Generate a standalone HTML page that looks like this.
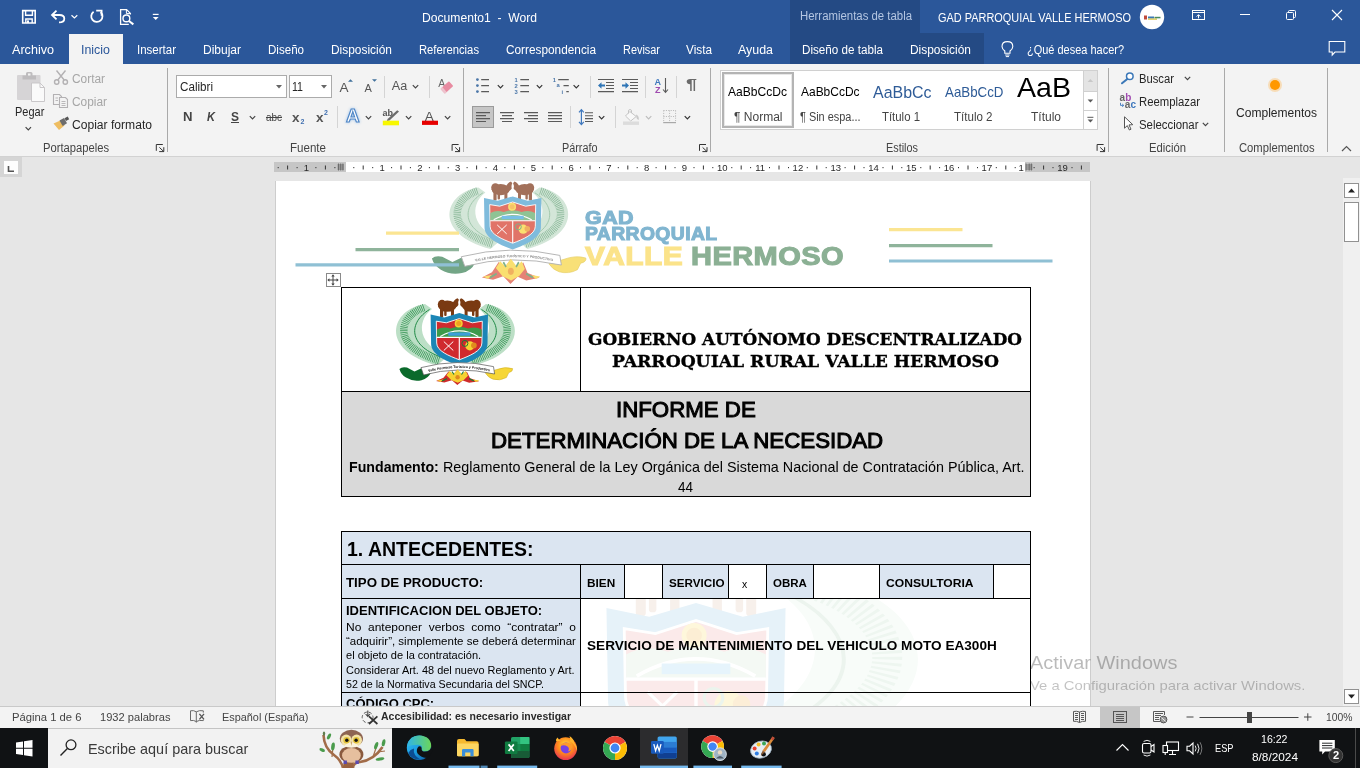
<!DOCTYPE html>
<html lang="es"><head><meta charset="utf-8"><title>Documento1 - Word</title>
<style>
html,body{margin:0;padding:0;}
body{width:1360px;height:768px;overflow:hidden;position:relative;background:#e6e6e6;font-family:"Liberation Sans",sans-serif;}
.a{position:absolute;}
.t{position:absolute;white-space:nowrap;transform-origin:0 50%;display:block;}
svg{position:absolute;overflow:visible;will-change:transform;}
#texts{position:absolute;left:0;top:0;width:1360px;height:768px;will-change:transform;}
#titlebar{left:0;top:0;width:1360px;height:64px;background:#2b579a;}
#ctx{left:790px;top:0;width:130px;height:33px;background:#244a84;}
#ctx2{left:790px;top:33px;width:194px;height:31px;background:#244a84;}
#tabsel{left:69px;top:34px;width:54px;height:30px;background:#f3f3f3;}
#ribbon{left:0;top:64px;width:1360px;height:92px;background:#f3f3f3;border-bottom:1px solid #d2d2d2;}
.vsep{width:1px;background:#a9a9a9;}
.vs2{width:1px;background:#d4d4d4;}
#docarea{left:0;top:156px;width:1360px;height:550px;background:#e6e6e6;}
#pagebox{left:275px;top:181px;width:816px;height:525px;background:#fff;border-left:1px solid #cdcdcd;border-right:1px solid #cdcdcd;box-sizing:border-box;overflow:hidden;}
#status{left:0;top:706px;width:1360px;height:22px;background:#f3f3f3;}
#taskbar{left:0;top:728px;width:1360px;height:40px;background:#101214;}
#search{left:48px;top:728px;width:344px;height:40px;background:#f2f2f2;}
.cell{position:absolute;box-sizing:border-box;border:1px solid #000;}
.blue{background:#dce6f2;}

</style></head>
<body>
<div class="a" id="titlebar"></div>
<div class="a" id="ctx"></div>
<div class="a" id="ctx2"></div>
<div class="a" id="tabsel"></div>
<div class="a" id="ribbon"></div>
<div class="a" id="docarea"></div>
<div class="a" style="left:0;top:156px;width:1360px;height:1px;background:#d2d2d2"></div>
<div class="a" style="left:0;top:157px;width:22px;height:20px;background:#d5d5d5"></div>
<div class="a" style="left:4px;top:161px;width:14px;height:13px;background:#fdfdfd"></div>
<div class="a" style="left:274px;top:162px;width:72px;height:10px;background:#c6c6c6"></div>
<div class="a" style="left:346px;top:162px;width:679px;height:10px;background:#fff"></div>
<div class="a" style="left:1025px;top:162px;width:65px;height:10px;background:#c6c6c6"></div>
<svg width="1360" height="40" viewBox="0 156 1360 40" style="left:0;top:156px" font-family='"Liberation Sans", sans-serif' font-size="9.5" fill="#2a2a2a" text-anchor="middle">
<path d="M8.5 166 V171.3 H14" fill="none" stroke="#555" stroke-width="1.6"/>
<path d="M287.6 165.5 V169.5 M325.4 165.5 V169.5 M363.2 165.5 V169.5 M401.0 165.5 V169.5 M438.8 165.5 V169.5 M476.6 165.5 V169.5 M514.4 165.5 V169.5 M552.2 165.5 V169.5 M590.0 165.5 V169.5 M627.8 165.5 V169.5 M665.6 165.5 V169.5 M703.4 165.5 V169.5 M741.2 165.5 V169.5 M779.0 165.5 V169.5 M816.8 165.5 V169.5 M854.6 165.5 V169.5 M892.4 165.5 V169.5 M930.2 165.5 V169.5 M968.0 165.5 V169.5 M1005.8 165.5 V169.5 M1043.6 165.5 V169.5 M1081.4 165.5 V169.5" stroke="#333" stroke-width="1"/>
<path d="M278.2 167 V168.2 M297.1 167 V168.2 M315.9 167 V168.2 M334.9 167 V168.2 M353.8 167 V168.2 M372.7 167 V168.2 M391.6 167 V168.2 M410.4 167 V168.2 M429.4 167 V168.2 M448.2 167 V168.2 M467.1 167 V168.2 M486.1 167 V168.2 M504.9 167 V168.2 M523.9 167 V168.2 M542.8 167 V168.2 M561.6 167 V168.2 M580.5 167 V168.2 M599.5 167 V168.2 M618.3 167 V168.2 M637.2 167 V168.2 M656.1 167 V168.2 M675.0 167 V168.2 M694.0 167 V168.2 M712.8 167 V168.2 M731.8 167 V168.2 M750.6 167 V168.2 M769.5 167 V168.2 M788.5 167 V168.2 M807.3 167 V168.2 M826.2 167 V168.2 M845.1 167 V168.2 M864.0 167 V168.2 M883.0 167 V168.2 M901.8 167 V168.2 M920.8 167 V168.2 M939.6 167 V168.2 M958.5 167 V168.2 M977.5 167 V168.2 M996.3 167 V168.2 M1015.2 167 V168.2 M1034.1 167 V168.2 M1053.0 167 V168.2 M1072.0 167 V168.2" stroke="#333" stroke-width="1"/>
<text x="382.1" y="170.6">1</text>
<text x="419.9" y="170.6">2</text>
<text x="457.7" y="170.6">3</text>
<text x="495.5" y="170.6">4</text>
<text x="533.3" y="170.6">5</text>
<text x="571.1" y="170.6">6</text>
<text x="608.9" y="170.6">7</text>
<text x="646.7" y="170.6">8</text>
<text x="684.5" y="170.6">9</text>
<text x="722.3" y="170.6">10</text>
<text x="760.1" y="170.6">11</text>
<text x="797.9" y="170.6">12</text>
<text x="835.7" y="170.6">13</text>
<text x="873.5" y="170.6">14</text>
<text x="911.3" y="170.6">15</text>
<text x="949.1" y="170.6">16</text>
<text x="986.9" y="170.6">17</text>
<text x="1021.2" y="170.6">1</text>
<text x="1062.5" y="170.6">19</text>
<text x="306.5" y="170.6">1</text>
<path d="M338.5 163.5 V170.5 M340.7 163.5 V170.5 M342.9 163.5 V170.5 M337.5 165 H344.0 M337.5 167 H344.0 M337.5 169 H344.0" stroke="#666" stroke-width="0.9"/>
<path d="M1026.0 163.5 V170.5 M1029.2 163.5 V170.5 M1031.4 163.5 V170.5 M1026.0 165 H1032.5 M1026.0 167 H1032.5 M1026.0 169 H1032.5" stroke="#666" stroke-width="0.9"/>
</svg>
<div class="a" id="pagebox"></div>
<svg width="1360" height="768" viewBox="0 0 1360 768" style="left:0;top:0">
<defs><clipPath id="wmclip"><rect x="581" y="599" width="449" height="107"/></clipPath></defs>
<g transform="translate(53.4 -116.6)">
<g transform="translate(459.3 335) scale(1.0 1) translate(-459.3 -335)">
<g >
<path d="M425 304 C 391 309 378 350 437 365.5 L 448 356 C 419 346 415 322 432 309 Z" fill="#d3e6d8"/>
<path d="M424 307.5 C 399 316 390 346 440 361" fill="none" stroke="#8dba9b" stroke-width="7.5" stroke-dasharray="0.8 1.0"/>
<path d="M429.5 309.5 C 409 322 406 346 445 358.5" fill="none" stroke="#a3c9ae" stroke-width="1"/>
</g>
<g transform="translate(911.0 0) scale(-1 1)">
<path d="M425 304 C 391 309 378 350 437 365.5 L 448 356 C 419 346 415 322 432 309 Z" fill="#d3e6d8"/>
<path d="M424 307.5 C 399 316 390 346 440 361" fill="none" stroke="#8dba9b" stroke-width="7.5" stroke-dasharray="0.8 1.0"/>
<path d="M429.5 309.5 C 409 322 406 346 445 358.5" fill="none" stroke="#a3c9ae" stroke-width="1"/>
</g>
</g>
<g  fill="#a2705a">
<ellipse cx="447.3" cy="306.2" rx="9" ry="5.6"/>
<ellipse cx="442" cy="304.4" rx="4.2" ry="4.6"/>
<path d="M452.5 303.5 Q454 299.5 457.6 298.2 L458.9 299.8 Q457.6 302 458.4 305 Q456.6 308 453 308 Z"/>
<rect x="440" y="308" width="3.2" height="9.2" rx="1"/><rect x="451" y="308" width="3" height="8.6" rx="1"/><rect x="444.2" y="309" width="2.4" height="7" rx="1"/>
</g>
<g transform="translate(918.6 0) scale(-1 1)" fill="#a2705a">
<ellipse cx="447.3" cy="306.2" rx="9" ry="5.6"/>
<ellipse cx="442" cy="304.4" rx="4.2" ry="4.6"/>
<path d="M452.5 303.5 Q454 299.5 457.6 298.2 L458.9 299.8 Q457.6 302 458.4 305 Q456.6 308 453 308 Z"/>
<rect x="440" y="308" width="3.2" height="9.2" rx="1"/><rect x="451" y="308" width="3" height="8.6" rx="1"/><rect x="444.2" y="309" width="2.4" height="7" rx="1"/>
</g>
<g transform="translate(3.3000000000000114 0)">
<path d="M427.3 314.6 L441 317.4 L456 313 L471 317.4 L484.7 314.6 L484.2 344 C 484.2 354 470 361 456 366 C 442 361 427.8 354 427.8 344 Z" fill="#7fbbdc"/>
<path d="M433 321.2 L443 322.8 L456 318.6 L469 322.8 L479 321.2 L478.6 343 C 478.6 351 466 356 456 359.8 C 446 356 433.4 351 433.4 343 Z" fill="#e17468" stroke="#fff" stroke-width="0.9"/>
<path d="M433.6 329.5 Q440 326 447 328.6 Q456 325 465 328.6 Q472 326 478.4 329.5 V337 H433.6 Z" fill="#8fc394"/>
<path d="M437 336.4 Q456 325.4 475 336.4" fill="none" stroke="#fff" stroke-width="1.2"/>
<rect x="445" y="332.4" width="22" height="3.4" fill="#78bfe6"/>
<path d="M433.6 337.4 H478.4 M456 337.4 V359.5" stroke="#fff" stroke-width="1.1"/>
<circle cx="455.4" cy="323.4" r="4" fill="#fadf70"/><circle cx="455.4" cy="323.4" r="2.5" fill="#f8c268"/>
<path d="M440.5 341.5 L450 350.5 M450 341.5 L440.5 350.5" stroke="#fff" stroke-width="1"/>
<circle cx="466.5" cy="345.8" r="4.6" fill="#fadf70"/><circle cx="470.6" cy="345.4" r="2.8" fill="#f0b060"/><circle cx="461.6" cy="343.4" r="3" fill="none" stroke="#7fb08a" stroke-width="1"/>
</g>
<g transform="translate(457.5 371.5) scale(1.36 1.30) translate(-457.5 -366.2)">
<path d="M431 372.6 L421 368.4 L414.5 371.6 L407 367.6 Q402 366.4 399.4 369 Q401 374.5 406 377.6 Q413 382 421.5 380.2 Q428.5 378.4 431 372.6 Z" fill="#73a586"/>
<path d="M485.4 373 L496.5 369.6 Q505 366.2 512.6 368.6 Q513.2 371.6 508.8 372.6 L506.4 377.6 Q500 381.2 493 379.2 Q488 377.4 485.4 373 Z" fill="#f8e077" stroke="#e6cf6a" stroke-width="0.5"/>
<path d="M421 367.6 Q457 358 493.5 366.6 L494.6 374 Q457 365.6 423.6 375 Z" fill="#fff" stroke="#b0b0b0" stroke-width="0.7"/>
<path id="rph" d="M427.5 372.4 Q457 364 490 371.4" fill="none"/>
<text font-size="2.6" font-weight="700" fill="#8a8a8a" font-family='"Liberation Sans",sans-serif'><textPath href="#rph" startOffset="4">VALLE HERMOSO TURÍSTICO Y PRODUCTIVO</textPath></text>
</g>
<g transform="translate(458 387.3) scale(1.34 1.62) translate(-458 -376.8)">
<path d="M436 381 l7.5 -3.2 l5 -6.4 l4.2 4 l4.6 -5.6 l4.6 5.6 l5 -3.6 l3.2 6.4 l9 3 l-10 1.6 l-6.4 -2.2 l-5.4 4.4 l-5.4 -4.8 l-7.6 2.2 Z" fill="#e58276"/>
<path d="M446.4 375.2 l3.2 -4.2 l3.8 3 l4.2 -4.6 l4.2 4.6 l4 -3 l2.2 4.8 l-4.2 4.2 l-6 2.8 l-6.6 -2.8 Z" fill="#fadf70"/>
<path d="M437 380.4 l6.5 -1 l-3 2.6 Z M479.5 380.4 l-6.5 -1 l3 2.6 Z" fill="#fadf70"/>
<circle cx="457.6" cy="377.2" r="2.2" fill="#f0b060"/>
<path d="M442 381 l5 -2.4 M474 381 l-5 -2.4 M452 371.5 l2 3 M463.5 371.5 l-2 3" stroke="#7fb08a" stroke-width="1.2"/>
</g>
</g>
<g stroke-width="3.2">
<path d="M386 233.2 H459" stroke="#fbe592"/><path d="M355.5 249.6 H459" stroke="#8fb49b"/><path d="M295.5 264.8 H459" stroke="#8fc0d4"/>
<path d="M889 229.6 H962.5" stroke="#fbe592"/><path d="M889 245.6 H992.5" stroke="#8fb49b"/><path d="M889 261 H1052.5" stroke="#8fc0d4"/>
</g>
<g transform="">
<g transform="translate(459.3 335) scale(1.0 1) translate(-459.3 -335)">
<g >
<path d="M425 304 C 391 309 378 350 437 365.5 L 448 356 C 419 346 415 322 432 309 Z" fill="#bcdfc6"/>
<path d="M424 307.5 C 399 316 390 346 440 361" fill="none" stroke="#3f9a5c" stroke-width="7.5" stroke-dasharray="0.8 1.0"/>
<path d="M429.5 309.5 C 409 322 406 346 445 358.5" fill="none" stroke="#1f8a45" stroke-width="1"/>
</g>
<g transform="translate(911.0 0) scale(-1 1)">
<path d="M425 304 C 391 309 378 350 437 365.5 L 448 356 C 419 346 415 322 432 309 Z" fill="#bcdfc6"/>
<path d="M424 307.5 C 399 316 390 346 440 361" fill="none" stroke="#3f9a5c" stroke-width="7.5" stroke-dasharray="0.8 1.0"/>
<path d="M429.5 309.5 C 409 322 406 346 445 358.5" fill="none" stroke="#1f8a45" stroke-width="1"/>
</g>
</g>
<g  fill="#7a3a12">
<ellipse cx="447.3" cy="306.2" rx="9" ry="5.6"/>
<ellipse cx="442" cy="304.4" rx="4.2" ry="4.6"/>
<path d="M452.5 303.5 Q454 299.5 457.6 298.2 L458.9 299.8 Q457.6 302 458.4 305 Q456.6 308 453 308 Z"/>
<rect x="440" y="308" width="3.2" height="9.2" rx="1"/><rect x="451" y="308" width="3" height="8.6" rx="1"/><rect x="444.2" y="309" width="2.4" height="7" rx="1"/>
</g>
<g transform="translate(918.6 0) scale(-1 1)" fill="#7a3a12">
<ellipse cx="447.3" cy="306.2" rx="9" ry="5.6"/>
<ellipse cx="442" cy="304.4" rx="4.2" ry="4.6"/>
<path d="M452.5 303.5 Q454 299.5 457.6 298.2 L458.9 299.8 Q457.6 302 458.4 305 Q456.6 308 453 308 Z"/>
<rect x="440" y="308" width="3.2" height="9.2" rx="1"/><rect x="451" y="308" width="3" height="8.6" rx="1"/><rect x="444.2" y="309" width="2.4" height="7" rx="1"/>
</g>
<g transform="translate(3.3000000000000114 0)">
<path d="M427.3 314.6 L441 317.4 L456 313 L471 317.4 L484.7 314.6 L484.2 344 C 484.2 354 470 361 456 366 C 442 361 427.8 354 427.8 344 Z" fill="#1c86b6"/>
<path d="M433 321.2 L443 322.8 L456 318.6 L469 322.8 L479 321.2 L478.6 343 C 478.6 351 466 356 456 359.8 C 446 356 433.4 351 433.4 343 Z" fill="#d02a2e" stroke="#fff" stroke-width="0.9"/>
<path d="M433.6 329.5 Q440 326 447 328.6 Q456 325 465 328.6 Q472 326 478.4 329.5 V337 H433.6 Z" fill="#3d9a4a"/>
<path d="M437 336.4 Q456 325.4 475 336.4" fill="none" stroke="#fff" stroke-width="1.2"/>
<rect x="445" y="332.4" width="22" height="3.4" fill="#3d9fd8"/>
<path d="M433.6 337.4 H478.4 M456 337.4 V359.5" stroke="#fff" stroke-width="1.1"/>
<circle cx="455.4" cy="323.4" r="4" fill="#f6d232"/><circle cx="455.4" cy="323.4" r="2.5" fill="#f0a020"/>
<path d="M440.5 341.5 L450 350.5 M450 341.5 L440.5 350.5" stroke="#fff" stroke-width="1"/>
<circle cx="466.5" cy="345.8" r="4.6" fill="#f6d232"/><circle cx="470.6" cy="345.4" r="2.8" fill="#e08a1e"/><circle cx="461.6" cy="343.4" r="3" fill="none" stroke="#1f7a35" stroke-width="1"/>
</g>
<g>
<path d="M431 372.6 L421 368.4 L414.5 371.6 L407 367.6 Q402 366.4 399.4 369 Q401 374.5 406 377.6 Q413 382 421.5 380.2 Q428.5 378.4 431 372.6 Z" fill="#0b6a2b"/>
<path d="M485.4 373 L496.5 369.6 Q505 366.2 512.6 368.6 Q513.2 371.6 508.8 372.6 L506.4 377.6 Q500 381.2 493 379.2 Q488 377.4 485.4 373 Z" fill="#f6d636" stroke="#c9a820" stroke-width="0.5"/>
<path d="M421 367.6 Q457 358 493.5 366.6 L494.6 374 Q457 365.6 423.6 375 Z" fill="#fff" stroke="#555" stroke-width="0.7"/>
<path id="rpm" d="M427.5 372.4 Q457 364 490 371.4" fill="none"/>
<text font-size="3.5" font-weight="700" fill="#111" font-family='"Liberation Sans",sans-serif'><textPath href="#rpm" startOffset="1">Valle Hermoso Turístico y Productivo</textPath></text>
</g>
<g>
<path d="M436 381 l7.5 -3.2 l5 -6.4 l4.2 4 l4.6 -5.6 l4.6 5.6 l5 -3.6 l3.2 6.4 l9 3 l-10 1.6 l-6.4 -2.2 l-5.4 4.4 l-5.4 -4.8 l-7.6 2.2 Z" fill="#cf2b2b"/>
<path d="M446.4 375.2 l3.2 -4.2 l3.8 3 l4.2 -4.6 l4.2 4.6 l4 -3 l2.2 4.8 l-4.2 4.2 l-6 2.8 l-6.6 -2.8 Z" fill="#f6d232"/>
<path d="M437 380.4 l6.5 -1 l-3 2.6 Z M479.5 380.4 l-6.5 -1 l3 2.6 Z" fill="#f6d232"/>
<circle cx="457.6" cy="377.2" r="2.2" fill="#e08a1e"/>
<path d="M442 381 l5 -2.4 M474 381 l-5 -2.4 M452 371.5 l2 3 M463.5 371.5 l-2 3" stroke="#1f7a35" stroke-width="1.2"/>
</g>
</g>
</svg>
<svg width="1360" height="768" viewBox="0 0 1360 768" style="left:0;top:0"><g clip-path="url(#wmclip)">
<g transform="translate(696 603) scale(3.12 3.12) translate(-459.3 -313)">
<g transform="translate(459.3 335) scale(1.28 1) translate(-459.3 -335)">
<g >
<path d="M425 304 C 391 309 378 350 437 365.5 L 448 356 C 419 346 415 322 432 309 Z" fill="#f8fcf9"/>
<path d="M424 307.5 C 399 316 390 346 440 361" fill="none" stroke="#eef6f0" stroke-width="7.5" stroke-dasharray="0.8 1.0"/>
<path d="M429.5 309.5 C 409 322 406 346 445 358.5" fill="none" stroke="#ecf4ee" stroke-width="1"/>
</g>
<g transform="translate(911.0 0) scale(-1 1)">
<path d="M425 304 C 391 309 378 350 437 365.5 L 448 356 C 419 346 415 322 432 309 Z" fill="#f8fcf9"/>
<path d="M424 307.5 C 399 316 390 346 440 361" fill="none" stroke="#eef6f0" stroke-width="7.5" stroke-dasharray="0.8 1.0"/>
<path d="M429.5 309.5 C 409 322 406 346 445 358.5" fill="none" stroke="#ecf4ee" stroke-width="1"/>
</g>
</g>
<g  fill="#f7f0eb">
<ellipse cx="447.3" cy="306.2" rx="9" ry="5.6"/>
<ellipse cx="442" cy="304.4" rx="4.2" ry="4.6"/>
<path d="M452.5 303.5 Q454 299.5 457.6 298.2 L458.9 299.8 Q457.6 302 458.4 305 Q456.6 308 453 308 Z"/>
<rect x="440" y="308" width="3.2" height="9.2" rx="1"/><rect x="451" y="308" width="3" height="8.6" rx="1"/><rect x="444.2" y="309" width="2.4" height="7" rx="1"/>
</g>
<g transform="translate(918.6 0) scale(-1 1)" fill="#f7f0eb">
<ellipse cx="447.3" cy="306.2" rx="9" ry="5.6"/>
<ellipse cx="442" cy="304.4" rx="4.2" ry="4.6"/>
<path d="M452.5 303.5 Q454 299.5 457.6 298.2 L458.9 299.8 Q457.6 302 458.4 305 Q456.6 308 453 308 Z"/>
<rect x="440" y="308" width="3.2" height="9.2" rx="1"/><rect x="451" y="308" width="3" height="8.6" rx="1"/><rect x="444.2" y="309" width="2.4" height="7" rx="1"/>
</g>
<g transform="translate(3.3000000000000114 0)">
<path d="M427.3 314.6 L441 317.4 L456 313 L471 317.4 L484.7 314.6 L484.2 344 C 484.2 354 470 361 456 366 C 442 361 427.8 354 427.8 344 Z" fill="#e6f2f9"/>
<path d="M433 321.2 L443 322.8 L456 318.6 L469 322.8 L479 321.2 L478.6 343 C 478.6 351 466 356 456 359.8 C 446 356 433.4 351 433.4 343 Z" fill="#fbeaea" stroke="#fff" stroke-width="0.9"/>
<path d="M433.6 329.5 Q440 326 447 328.6 Q456 325 465 328.6 Q472 326 478.4 329.5 V337 H433.6 Z" fill="#f4f9f4"/>
<path d="M437 336.4 Q456 325.4 475 336.4" fill="none" stroke="#fff" stroke-width="1.2"/>
<rect x="445" y="332.4" width="22" height="3.4" fill="#e6f4fc"/>
<path d="M433.6 337.4 H478.4 M456 337.4 V359.5" stroke="#fff" stroke-width="1.1"/>
<circle cx="455.4" cy="323.4" r="4" fill="#fef7db"/><circle cx="455.4" cy="323.4" r="2.5" fill="#fceed4"/>
<path d="M440.5 341.5 L450 350.5 M450 341.5 L440.5 350.5" stroke="#fff" stroke-width="1"/>
<circle cx="466.5" cy="345.8" r="4.6" fill="#fef7db"/><circle cx="470.6" cy="345.4" r="2.8" fill="#fceed7"/><circle cx="461.6" cy="343.4" r="3" fill="none" stroke="#ebf4ed" stroke-width="1"/>
</g>
<g>
<path d="M431 372.6 L421 368.4 L414.5 371.6 L407 367.6 Q402 366.4 399.4 369 Q401 374.5 406 377.6 Q413 382 421.5 380.2 Q428.5 378.4 431 372.6 Z" fill="#e9f2eb"/>
<path d="M485.4 373 L496.5 369.6 Q505 366.2 512.6 368.6 Q513.2 371.6 508.8 372.6 L506.4 377.6 Q500 381.2 493 379.2 Q488 377.4 485.4 373 Z" fill="#fef9e0" stroke="#f9f3d7" stroke-width="0.5"/>
<path d="M421 367.6 Q457 358 493.5 366.6 L494.6 374 Q457 365.6 423.6 375 Z" fill="#fff" stroke="#f2f2f2" stroke-width="0.7"/>
</g>
<g>
<path d="M436 381 l7.5 -3.2 l5 -6.4 l4.2 4 l4.6 -5.6 l4.6 5.6 l5 -3.6 l3.2 6.4 l9 3 l-10 1.6 l-6.4 -2.2 l-5.4 4.4 l-5.4 -4.8 l-7.6 2.2 Z" fill="#fae5e2"/>
<path d="M446.4 375.2 l3.2 -4.2 l3.8 3 l4.2 -4.6 l4.2 4.6 l4 -3 l2.2 4.8 l-4.2 4.2 l-6 2.8 l-6.6 -2.8 Z" fill="#fef7db"/>
<path d="M437 380.4 l6.5 -1 l-3 2.6 Z M479.5 380.4 l-6.5 -1 l3 2.6 Z" fill="#fef7db"/>
<circle cx="457.6" cy="377.2" r="2.2" fill="#fceed7"/>
<path d="M442 381 l5 -2.4 M474 381 l-5 -2.4 M452 371.5 l2 3 M463.5 371.5 l-2 3" stroke="#ebf4ed" stroke-width="1.2"/>
</g>
</g>
</g></svg>
<div class="cell" style="left:341px;top:287px;width:240px;height:105px;"></div>
<div class="cell" style="left:580px;top:287px;width:451px;height:105px;"></div>
<div class="cell" style="left:341px;top:391px;width:690px;height:106px;background:#d9d9d9;"></div>
<div class="cell" style="left:341px;top:531px;width:690px;height:34px;background:#dbe5f1;"></div>
<div class="cell" style="left:341px;top:564px;width:240px;height:35px;background:#dbe5f1;"></div>
<div class="cell" style="left:580px;top:564px;width:45px;height:35px;background:#dbe5f1;"></div>
<div class="cell" style="left:624px;top:564px;width:39px;height:35px;"></div>
<div class="cell" style="left:662px;top:564px;width:67px;height:35px;background:#dbe5f1;"></div>
<div class="cell" style="left:728px;top:564px;width:39px;height:35px;"></div>
<div class="cell" style="left:766px;top:564px;width:48px;height:35px;background:#dbe5f1;"></div>
<div class="cell" style="left:813px;top:564px;width:67px;height:35px;"></div>
<div class="cell" style="left:879px;top:564px;width:115px;height:35px;background:#dbe5f1;"></div>
<div class="cell" style="left:993px;top:564px;width:38px;height:35px;"></div>
<div class="cell" style="left:341px;top:598px;width:240px;height:95px;background:#dbe5f1;"></div>
<div class="cell" style="left:580px;top:598px;width:451px;height:95px;"></div>
<div class="cell" style="left:341px;top:692px;width:240px;height:29px;background:#dbe5f1;"></div>
<div class="cell" style="left:580px;top:692px;width:451px;height:29px;"></div>
<div class="a" style="left:326px;top:272.5px;width:14.5px;height:14px;background:#fff;border:1px solid #8a8a8a;box-sizing:border-box"></div>
<svg width="14" height="14" viewBox="0 0 14 14" style="left:326px;top:272.5px"><path d="M7 2.5 V11.5 M2.5 7 H11.5" stroke="#444" stroke-width="1"/><path d="M7 1.3 L5.3 3.4 H8.7 Z M7 12.7 L5.3 10.6 H8.7 Z M1.3 7 L3.4 5.3 V8.7 Z M12.7 7 L10.6 5.3 V8.7 Z" fill="#444"/></svg>
<div class="a" style="left:1343px;top:178px;width:17px;height:528px;background:#f0f0f0"></div>
<div class="a" style="left:1344px;top:183px;width:15px;height:15px;background:#fff;border:1px solid #919191;box-sizing:border-box"></div>
<div class="a" style="left:1344px;top:202px;width:15px;height:40px;background:#fff;border:1px solid #919191;box-sizing:border-box"></div>
<div class="a" style="left:1344px;top:689px;width:15px;height:15px;background:#fff;border:1px solid #919191;box-sizing:border-box"></div>
<svg width="17" height="530" viewBox="1343 178 17 530" style="left:1343px;top:178px"><path d="M1348 192.5 L1351.5 188.5 L1355 192.5 Z M1348 694.5 L1351.5 698.5 L1355 694.5 Z" fill="#222"/></svg>

<div class="a" id="status"></div>
<div class="a" id="taskbar"></div>
<div class="a" id="search"></div>
<!-- ribbon group separators -->
<div class="a vsep" style="left:167px;top:68px;height:84px"></div>
<div class="a vsep" style="left:463px;top:68px;height:84px"></div>
<div class="a vsep" style="left:710px;top:68px;height:84px"></div>
<div class="a vsep" style="left:1108px;top:68px;height:84px"></div>
<div class="a vsep" style="left:1224px;top:68px;height:84px"></div>
<div class="a vsep" style="left:1327px;top:68px;height:84px"></div>
<!-- small separators -->
<div class="a vs2" style="left:384px;top:76px;height:22px"></div>
<div class="a vs2" style="left:429px;top:76px;height:22px"></div>
<div class="a vs2" style="left:590px;top:76px;height:22px"></div>
<div class="a vs2" style="left:645px;top:76px;height:22px"></div>
<div class="a vs2" style="left:676px;top:76px;height:22px"></div>
<div class="a vs2" style="left:570px;top:106px;height:22px"></div>
<div class="a vs2" style="left:337px;top:106px;height:22px"></div>
<div class="a vs2" style="left:615px;top:106px;height:22px"></div>
<!-- font boxes -->
<div class="a" style="left:176px;top:75px;width:111px;height:23px;background:#fff;border:1px solid #ababab;box-sizing:border-box"></div>
<div class="a" style="left:289px;top:75px;width:43px;height:23px;background:#fff;border:1px solid #ababab;box-sizing:border-box"></div>
<!-- align-left selected -->
<div class="a" style="left:472px;top:106px;width:22px;height:22px;background:#c6c6c6;border:1px solid #9a9a9a;box-sizing:border-box"></div>
<!-- styles gallery -->
<div class="a" style="left:720px;top:70px;width:378px;height:60px;background:#fff;border:1px solid #d0d0d0;box-sizing:border-box"></div>
<div class="a" style="left:722px;top:72px;width:72px;height:56px;background:#fff;border:2px solid #b4b4b4;box-sizing:border-box;box-shadow:inset 0 0 0 1px #e8e8e8"></div>
<div class="a" style="left:1083px;top:71px;width:13px;height:58px;background:#fff;border-left:1px solid #d0d0d0"></div>
<div class="a" style="left:1084px;top:71px;width:13px;height:20px;background:#e4e4e4"></div>
<div class="a" style="left:1084px;top:91px;width:13px;height:1px;background:#d0d0d0"></div>
<div class="a" style="left:1084px;top:110px;width:13px;height:1px;background:#d0d0d0"></div>
<svg width="1360" height="160" viewBox="0 0 1360 160" style="left:0;top:0" font-family='"Liberation Sans", sans-serif'>
<defs>
<path id="chev" d="M-2.7 -1.4 L0 1.3 L2.7 -1.4" fill="none" stroke-width="1.2"/>
<path id="launch" d="M0.5 6.8 V0.5 H7 M3.6 3.4 L8 7.6 M8 3.2 V7.6 H3.4" fill="none" stroke="#333" stroke-width="1"/>
</defs>
<!-- paste icon -->
<rect x="17" y="75" width="23.5" height="25" rx="1" fill="#d6d4d6"/>
<path d="M22.5 79.5 V75.5 H26 V73.5 Q26 72 27.5 72 H31 Q32.5 72 32.5 73.5 V75.5 H36 V79.5 Z" fill="#bebcbe"/>
<rect x="28" y="73.5" width="2.5" height="2" fill="#f3f3f3"/>
<path d="M31.5 83 H40 L44.5 87.5 V101.5 H31.5 Z" fill="#fafafa" stroke="#c9c7c9" stroke-width="1"/>
<path d="M40 83 V87.5 H44.5" fill="none" stroke="#c9c7c9" stroke-width="1"/>
<use href="#chev" x="28.3" y="128.5" stroke="#444"/>
<!-- scissors -->
<g stroke="#b3b1b3" fill="none" stroke-width="1.4">
<circle cx="56.7" cy="82" r="2.2"/><circle cx="65.3" cy="82" r="2.2"/>
<path d="M57.8 80 L65.5 70.5 M64.2 80 L56.5 70.5"/>
</g>
<!-- copy icon -->
<g stroke="#b3b1b3" fill="#f3f3f3" stroke-width="1.1">
<path d="M53.5 94.5 H59.5 L61.5 96.5 V104.5 H53.5 Z"/>
<path d="M59.5 97.5 H65.5 L67.5 99.5 V107.5 H59.5 Z"/>
<path d="M55.5 98 H58 M55.5 100.5 H58 M61.5 101.5 H65.5 M61.5 103.5 H65.5 M61.5 105.5 H65.5" stroke-width="0.9"/>
</g>
<!-- format painter -->
<g>
<path d="M53.5 123.5 L61.5 120 L64.5 125.5 L59 130 Z" fill="#eebd61"/>
<path d="M59.5 120.5 L64 118 L67 123.2 L62.7 126 Z" fill="#6d6d6d"/>
<path d="M64.5 118.2 L67.7 116.5 L69.2 119.2 L66 121 Z" fill="#555"/>
</g>
<use href="#launch" x="155.8" y="144"/>
<use href="#launch" x="451.6" y="144"/>
<use href="#launch" x="699" y="144"/>
<use href="#launch" x="1096.6" y="144"/>
<!-- font dropdown arrows -->
<path d="M276 85 L282 85 L279 88.5 Z" fill="#666"/>
<path d="M321 85 L327 85 L324 88.5 Z" fill="#666"/>
<!-- dropdown chevron after S -->
<use href="#chev" x="252.5" y="117.5" stroke="#444"/>
<!-- x2 / x^2 -->
<g font-weight="700" fill="#555" font-size="13.5">
<text x="292" y="121.5">x</text><text x="316" y="121.5">x</text>
</g>
<g font-size="7" fill="#3f6fb0" font-weight="700"><text x="300.5" y="124">2</text><text x="324" y="114.5">2</text></g>
<!-- grow/shrink font -->
<g fill="#555"><text x="339.6" y="91.8" font-size="13.5">A</text><text x="364.4" y="91.8" font-size="11">A</text></g>
<path d="M348 81.8 L353 81.8 L350.5 79.2 Z M372 79.2 L377 79.2 L374.5 81.8 Z" fill="#41719c"/>
<text x="391.8" y="89.8" font-size="12.5" fill="#555" textLength="15.4" lengthAdjust="spacingAndGlyphs">Aa</text>
<use href="#chev" x="415.5" y="86.5" stroke="#444"/>
<!-- clear formatting -->
<text x="438.3" y="86.6" font-size="10.5" fill="#666">A</text>
<g transform="rotate(-42 447 88)"><rect x="441.5" y="84.2" width="11.5" height="6.6" rx="0.8" fill="#e88ba1"/><rect x="441.5" y="84.2" width="2.6" height="6.6" fill="#f3f3f3" opacity=".55"/></g>
<!-- text effects A -->
<text x="346" y="122.3" font-size="18" font-weight="700" fill="#fff" stroke="#4f86c6" stroke-width="1.1" style="filter:drop-shadow(0 0 1.5px #9cc2ea)" textLength="13.6" lengthAdjust="spacingAndGlyphs">A</text>
<use href="#chev" x="368.5" y="117.5" stroke="#444"/>
<!-- highlight -->
<text x="382.6" y="115.8" font-size="9" font-weight="700" fill="#555">ab</text>
<path d="M397.2 110.3 L399 111.6 L389.5 120.6 L386.8 120.9 L387.6 118.9 Z" fill="#6b6b6b"/>
<rect x="382.8" y="120.7" width="16.2" height="4.6" fill="#f7f700"/>
<use href="#chev" x="408.6" y="117.5" stroke="#444"/>
<!-- font color -->
<text x="424.8" y="121" font-size="13.5" fill="#555">A</text>
<rect x="422" y="120.7" width="16" height="4.2" fill="#e60000"/>
<use href="#chev" x="447.6" y="117.5" stroke="#444"/>
<!-- bullets -->
<g fill="#4a76a8"><circle cx="477.4" cy="79.6" r="1.4"/><circle cx="477.4" cy="85.6" r="1.4"/><circle cx="477.4" cy="91.6" r="1.4"/></g>
<path d="M481.2 79.6 H489 M481.2 85.6 H489 M481.2 91.6 H489" stroke="#5a5a5a" stroke-width="1.1"/>
<use href="#chev" x="500.5" y="86.5" stroke="#333"/>
<!-- numbering -->
<g font-size="5.8" font-weight="700" fill="#4a76a8"><text x="514.6" y="81.7">1</text><text x="514.6" y="87.7">2</text><text x="514.6" y="93.7">3</text></g>
<path d="M520.3 79.6 H529 M520.3 85.6 H529 M520.3 91.6 H529" stroke="#5a5a5a" stroke-width="1.1"/>
<use href="#chev" x="539.5" y="86.5" stroke="#333"/>
<!-- multilevel -->
<g font-size="5.8" font-weight="700" fill="#4a76a8"><text x="552.8" y="81.7">1</text><text x="556.6" y="87.2">a</text><text x="561.6" y="93.7">i</text></g>
<path d="M558.2 79.6 H568.8 M563.5 85.6 H568.8 M566.3 91.6 H568.8" stroke="#5a5a5a" stroke-width="1.1"/>
<use href="#chev" x="576.3" y="86.5" stroke="#333"/>
<!-- outdent / indent -->
<g stroke="#5a5a5a" stroke-width="1.1">
<path d="M598 79.5 H614 M606 82.5 H614 M606 85.5 H614 M606 88.5 H614 M598 91.6 H614"/>
<path d="M622 79.5 H638 M630 82.5 H638 M630 85.5 H638 M630 88.5 H638 M622 91.6 H638"/>
</g>
<path d="M598 85.5 L601.5 82.3 V84.6 H605 V86.4 H601.5 V88.7 Z" fill="#2e75b6"/>
<path d="M629 85.5 L625.5 82.3 V84.6 H622 V86.4 H625.5 V88.7 Z" fill="#2e75b6"/>
<!-- sort -->
<text x="654.6" y="84.6" font-size="9" font-weight="700" fill="#3f78bd">A</text>
<text x="654.9" y="92.8" font-size="9" font-weight="700" fill="#a04bb0">Z</text>
<path d="M665.5 78 V92 M663 89.5 L665.5 92.3 L668 89.5" fill="none" stroke="#5a5a5a" stroke-width="1.1"/>
<!-- pilcrow -->
<text x="686" y="89.4" font-size="15" font-weight="700" fill="#6a6a6a" textLength="11" lengthAdjust="spacingAndGlyphs">¶</text>
<!-- alignment -->
<g stroke="#5a5a5a" stroke-width="1.1">
<path d="M476 112.6 H490 M476 115.6 H486 M476 118.6 H490 M476 121.5 H486"/>
<path d="M500 112.6 H514 M502 115.6 H512 M500 118.6 H514 M502 121.5 H512"/>
<path d="M524 112.6 H538 M528 115.6 H538 M524 118.6 H538 M528 121.5 H538"/>
<path d="M548 112.6 H562 M548 115.6 H562 M548 118.6 H562 M548 121.5 H562"/>
<path d="M585 112.7 H593 M585 115.7 H593 M585 118.6 H593 M585 121.5 H593"/>
</g>
<path d="M581.4 110 V124.2 M579 112.3 L581.4 109.6 L583.8 112.3 M579 121.9 L581.4 124.6 L583.8 121.9" fill="none" stroke="#3f78bd" stroke-width="1.2"/>
<use href="#chev" x="601.6" y="117.5" stroke="#333"/>
<!-- shading (disabled) -->
<path d="M629.8 111.5 L636.2 116.5 L630.7 121 L625.5 116 Z" fill="#f8f8f8" stroke="#c4c4c4" stroke-width="1"/>
<path d="M628.5 113.5 V110.3 Q630 108.6 631.5 110.3 V113" fill="none" stroke="#c4c4c4" stroke-width="1"/>
<path d="M636 114.5 Q639.3 115.8 638.8 120 Q636.5 119.5 636.3 117 Z" fill="#c9c9c9"/>
<rect x="623" y="121.5" width="16" height="3.4" fill="#dcdcdc"/>
<use href="#chev" x="648.6" y="117.5" stroke="#bdbdbd"/>
<!-- borders -->
<g stroke="#b5b5b5" stroke-width="1" stroke-dasharray="1 1.4">
<path d="M663.5 110.5 H676 M663.5 116.5 H676 M663.7 110.5 V122 M669.6 110.5 V122 M675.6 110.5 V122"/>
</g>
<path d="M663.2 122.6 H676" stroke="#a8a8a8" stroke-width="1.2"/>
<use href="#chev" x="687.4" y="117.5" stroke="#333"/>
<!-- gallery arrows -->
<path d="M1087.6 82 L1090.4 79 L1093.2 82 Z" fill="#c8c8c8"/>
<path d="M1087.6 99.6 L1093.2 99.6 L1090.4 102.6 Z" fill="#5a5a5a"/>
<path d="M1087.4 117.3 H1093.4" stroke="#5a5a5a" stroke-width="1"/>
<path d="M1087.6 119.4 L1093.2 119.4 L1090.4 122.4 Z" fill="#5a5a5a"/>
<!-- find -->
<circle cx="1129.8" cy="76.3" r="3.3" fill="#fff" stroke="#3b78b8" stroke-width="1.5"/>
<path d="M1127.3 78.9 L1122 83.3" stroke="#3b78b8" stroke-width="2" stroke-linecap="round"/>
<use href="#chev" x="1187.5" y="78.3" stroke="#444"/>
<!-- replace -->
<g font-size="10" font-weight="700" font-family="Liberation Sans, sans-serif">
<text x="1119.6" y="100.6" fill="#666">a</text><text x="1125.2" y="100.6" fill="#a04bb0">b</text>
<text x="1124.8" y="107.8" fill="#666">a</text><text x="1130.4" y="107.8" fill="#3f78bd">c</text>
</g>
<path d="M1120.5 102.8 V105.4 H1123.5 M1122.2 104 L1123.8 105.4 L1122.2 106.8" fill="none" stroke="#3f78bd" stroke-width="0.9"/>
<!-- select cursor -->
<path d="M1124.5 116.8 V128.2 L1127.3 125.6 L1129.4 130 L1131 129.2 L1129 124.9 L1132.8 124.7 Z" fill="#fff" stroke="#555" stroke-width="1"/>
<use href="#chev" x="1205.5" y="124.3" stroke="#444"/>
<!-- complementos dot -->
<circle cx="1275" cy="85" r="7" fill="#ffb347" opacity=".35"/>
<circle cx="1275" cy="85" r="5" fill="#ff9800"/>
<!-- collapse -->
<path d="M1342 151 L1346.5 146.5 L1351 151" fill="none" stroke="#555" stroke-width="1.2"/>
</svg>

<svg width="1360" height="64" viewBox="0 0 1360 64" style="left:0;top:0" fill="none" stroke="#fff">
<!-- save -->
<path d="M22.7 10.6 H35.2 V23 H22.7 Z" stroke-width="1.6"/>
<path d="M25.6 10.6 V15.2 H32.4 V10.6" stroke-width="1.4"/>
<path d="M25.8 23 V19 H32.2 V23" stroke-width="1.4"/>
<rect x="27" y="20.4" width="2" height="2.6" fill="#fff" stroke="none"/>
<!-- undo -->
<path d="M56.5 10.6 L52 15 L56.5 19.4" stroke-width="1.8"/>
<path d="M52.6 15 H59.5 Q64.3 15 64.3 18.7 Q64.3 22.4 59 22.4" stroke-width="1.8"/>
<path d="M71.5 15.3 L74.4 18 L77.3 15.3" stroke-width="1.2"/>
<!-- redo -->
<path d="M100.6 12.2 A5.6 5.6 0 1 1 93.6 11.8" stroke-width="1.8"/>
<path d="M96.2 10.6 H101.6 V15.8" stroke-width="1.8"/>
<!-- print preview -->
<path d="M128.8 24.3 H120.6 V9.6 H126.6 L130.4 13.4 V14.5" stroke-width="1.3"/>
<path d="M126.4 9.8 V13.6 H130.2" stroke-width="1"/>
<circle cx="126.4" cy="18.4" r="3.4" stroke-width="1.4"/>
<path d="M129 21 L133.4 24.4" stroke-width="2"/>
<!-- customize -->
<path d="M152.8 14.4 H158.6" stroke-width="1.2"/>
<path d="M152.8 17 H158.6 L155.7 20 Z" fill="#fff" stroke="none"/>
<!-- avatar -->
<circle cx="1152" cy="17" r="12.2" fill="#fff" stroke="none"/>
<rect x="1144" y="15.5" width="3" height="4" fill="#c04a3a" stroke="none"/>
<rect x="1148" y="16.5" width="6" height="2" fill="#3a78b4" stroke="none"/>
<rect x="1148" y="18.5" width="9" height="1.2" fill="#d8c13a" stroke="none"/>
<rect x="1154.5" y="16.8" width="6" height="1.5" fill="#4d8a5c" stroke="none"/>
<!-- ribbon display -->
<rect x="1192.5" y="10.5" width="12" height="9" stroke-width="1"/>
<path d="M1192.5 12.5 H1204.5" stroke-width="1"/>
<path d="M1198.5 18.4 V14.8 M1196.6 16.6 L1198.5 14.7 L1200.4 16.6" stroke-width="1"/>
<!-- min / restore / close -->
<path d="M1240 14.5 H1250" stroke-width="1" shape-rendering="crispEdges"/>
<rect x="1286.5" y="12.5" width="7" height="7" rx="1" stroke-width="1"/>
<path d="M1288.5 12.5 V11.5 Q1288.5 10.5 1289.5 10.5 H1294.5 Q1295.5 10.5 1295.5 11.5 V16.5 Q1295.5 17.5 1294.5 17.5 H1293.5" stroke-width="1"/>
<path d="M1332 10 L1342 20 M1342 10 L1332 20" stroke-width="1.1"/>
<!-- lightbulb -->
<path d="M1004.8 51 Q1002 48.6 1002 46.4 Q1002 41.6 1007.4 41.6 Q1012.8 41.6 1012.8 46.4 Q1012.8 48.6 1010 51 V53.2 H1004.8 Z" stroke-width="1.1"/>
<path d="M1005.2 55 H1009.6 M1005.8 56.6 H1009" stroke-width="1"/>
<!-- comments -->
<path d="M1329.2 41.5 H1344.8 V52 H1335 L1332.2 55 V52 H1329.2 Z" stroke-width="1.1"/>
</svg>

<div class="a" style="left:0;top:706px;width:1360px;height:1px;background:#c9c9c9"></div>
<div class="a" style="left:1100px;top:707px;width:40px;height:21px;background:#c6c6c6"></div>
<svg width="1360" height="22" viewBox="0 706 1360 22" style="left:0;top:706px" fill="none" stroke="#5a5a5a" stroke-width="1">
<!-- proofing book icon -->
<path d="M196.3 711.8 V722.6 M196.3 711.8 Q193.5 710 190.5 710.8 V720.6 Q193.5 719.8 196.3 721.6 Q199 719.8 203.3 720.6 V719.6 M196.3 711.8 Q199.5 710 203.3 710.8 V712.6" stroke="#6a6a6a"/>
<path d="M199.4 713.8 L204 719.4 M204 713.8 L199.4 719.4" stroke-width="1.3" stroke="#555"/>
<!-- accessibility icon -->
<circle cx="367.6" cy="717.4" r="5.4" stroke-dasharray="3.2 2" stroke="#555"/>
<path d="M367.8 710.4 V716 M365.6 714 L367.8 716.4 L370 714" stroke-width="1.1" stroke="#444"/>
<path d="M369 716.4 L377.4 724 M377.4 716.4 L369 724" stroke-width="1.7" stroke="#333"/>
<!-- read mode -->
<path d="M1079.5 712 V722.5 M1079.5 712 Q1076.5 710.8 1073.5 711.5 V721.3 Q1076.5 720.8 1079.5 722.5 Q1082.5 720.8 1085.5 721.3 V711.5 Q1082.5 710.8 1079.5 712"/>
<path d="M1075 713.5 H1078 M1075 715.5 H1078 M1075 717.5 H1078 M1075 719.5 H1078 M1081 713.5 H1084 M1081 715.5 H1084 M1081 717.5 H1084 M1081 719.5 H1084" stroke-width="1" shape-rendering="crispEdges"/>
<!-- print layout -->
<rect x="1113.5" y="711.5" width="13" height="11" stroke="#555"/>
<path d="M1116 714.5 H1124 M1116 716.5 H1124 M1116 718.5 H1124 M1116 720.5 H1124" stroke="#555" stroke-width="1" shape-rendering="crispEdges"/>
<!-- web layout -->
<path d="M1160 721.5 H1153.5 V711.5 H1164.5 V715"/>
<path d="M1155 713.5 H1163 M1155 715.5 H1161 M1155 717.5 H1159 M1155 719.5 H1159" stroke-width="1" shape-rendering="crispEdges"/>
<circle cx="1163.5" cy="719.5" r="3.4" fill="#9a9a9a" stroke="#555"/><path d="M1161.4 717.6 L1165.6 721.4" stroke="#f3f3f3" stroke-width="0.9"/>
<!-- zoom slider -->
<path d="M1186.5 717 H1193.5 M1199.5 717.5 H1298.5 M1304 717 H1311.5 M1307.8 713.3 V720.8" stroke="#444"/>
<rect x="1247" y="712" width="5" height="11" fill="#444" stroke="none"/>
</svg>

<div class="a" style="left:48px;top:728px;width:344px;height:1px;background:#c4c4c4"></div>
<div class="a" style="left:640px;top:728px;width:48px;height:40px;background:#2c2c2e"></div>
<svg width="1360" height="40" viewBox="0 728 1360 40" style="left:0;top:728px">
<defs>
<linearGradient id="edg" x1="0" y1="0" x2="1" y2="1"><stop offset="0" stop-color="#35c1f1"/><stop offset=".5" stop-color="#1b9de2"/><stop offset="1" stop-color="#0c59a4"/></linearGradient>
<linearGradient id="edg2" x1="0" y1="0" x2="1" y2="0"><stop offset="0" stop-color="#2fb4e8"/><stop offset="1" stop-color="#6bd65a"/></linearGradient>
<radialGradient id="ffg" cx=".5" cy=".35" r=".7"><stop offset="0" stop-color="#ffdf3f"/><stop offset=".5" stop-color="#ff8a1c"/><stop offset="1" stop-color="#e3265c"/></radialGradient>
</defs>
<!-- windows logo -->
<path d="M16 742.5 L23 741.5 V747.8 H16 Z M24 741.3 L32.5 740 V747.8 H24 Z M16 748.8 H23 V755 L16 754 Z M24 748.8 H32.5 V756.5 L24 755.2 Z" fill="#fff"/>
<!-- search icon -->
<circle cx="71" cy="744.8" r="4.9" fill="none" stroke="#222" stroke-width="1.3"/><path d="M67.4 748.6 L60.5 755.4" stroke="#222" stroke-width="1.4"/>
<!-- owl on branch -->
<g>
<path d="M323.5 735 Q324 748 334 755 Q341 760 343 768 H353 Q353 763 360 762 Q374 760 382.5 747" fill="none" stroke="#a26c49" stroke-width="2.6"/>
<path d="M343 768 Q343 761 347 760 L354 762 L353 768 Z" fill="#9a6240"/>
<path d="M332 757 L333 747 M373 757 L376 748 M378 752 L385 751" stroke="#a26c49" stroke-width="1.2"/>
<g fill="#4a9b4c"><ellipse cx="324" cy="733.6" rx="1.2" ry="2.2" fill="#5f7e4d"/><ellipse cx="329" cy="736.4" rx="1.6" ry="3.2" transform="rotate(28 329 736.4)"/><ellipse cx="322.2" cy="750" rx="3" ry="1.6" transform="rotate(25 322.2 750)"/><ellipse cx="333" cy="746.4" rx="1.8" ry="4" transform="rotate(8 333 746.4)"/><ellipse cx="376.2" cy="745.6" rx="1.7" ry="3.8" transform="rotate(20 376.2 745.6)"/><ellipse cx="383.6" cy="742.8" rx="1.7" ry="3.6" transform="rotate(12 383.6 742.8)"/><ellipse cx="380" cy="759" rx="4.4" ry="1.6" transform="rotate(-10 380 759)"/></g>
<ellipse cx="351.4" cy="754.4" rx="12" ry="8.6" fill="#8a5a3e"/>
<ellipse cx="351.4" cy="755.4" rx="9.4" ry="7.4" fill="#e6bf9e"/>
<ellipse cx="351.4" cy="738.6" rx="11.6" ry="8.8" fill="#8d6452"/>
<ellipse cx="346.2" cy="740.2" rx="5.4" ry="5.6" fill="#f3e2a6"/><ellipse cx="356.6" cy="740.2" rx="5.4" ry="5.6" fill="#f3e2a6"/>
<path d="M343.5 746 Q351.4 749.5 359.3 746 L351.4 741 Z" fill="#fbf3dc"/>
<circle cx="346.6" cy="740.2" r="3.2" fill="#e3c23a"/><circle cx="356.3" cy="740.2" r="3.2" fill="#e3c23a"/>
<circle cx="346.8" cy="740.3" r="1.7" fill="#111"/><circle cx="356.1" cy="740.3" r="1.7" fill="#111"/>
<path d="M350.4 741.5 L352.4 741.5 L351.4 746 Z" fill="#c9a86a"/>
<path d="M343.5 760.5 h3.4 v3.4 h-3.4 Z M355.4 760.5 h3.4 v3.4 h-3.4 Z" fill="#5a4ab0"/>
</g>
<!-- edge -->
<circle cx="419" cy="747.8" r="12.2" fill="url(#edg)"/>
<path d="M407 746.4 Q408.6 735.6 419.5 735.6 Q431 736.2 431.2 746.2 Q430.6 751.4 424.8 751.4 Q421.4 751.2 421.8 748.4 Q422.6 745.2 418.6 744.8 Q412 744.6 407 746.4 Z" fill="url(#edg2)"/>
<path d="M421.6 748.2 Q421.2 751.6 425 751.6 Q430.4 751.4 431.2 746.8 L432.4 751 Q430.6 756 426.4 758 Q420.4 757.4 417.4 753.2 Q415.8 749.6 418.6 746.4 Q421.6 745.6 421.6 748.2 Z" fill="#101214"/>
<path d="M414 748.6 Q412.6 755.6 420.4 759.4 Q411.6 760 408.2 753 Q410.2 749.4 414 748.6 Z" fill="#0b4d93"/>
<!-- explorer -->
<path d="M457 741 Q457 739 459 739 H464.5 L466.5 741.2 H476.6 Q478.6 741.2 478.6 743 V754.4 Q478.6 756.3 476.6 756.3 H459 Q457 756.3 457 754.4 Z" fill="#f5b92f"/>
<rect x="457" y="743.4" width="21.6" height="12.9" rx="1.2" fill="#fcd662"/>
<path d="M462 756.3 V750.2 Q462 749 463.2 749 H472.4 Q473.6 749 473.6 750.2 V756.3 H470.4 V752.6 H465.2 V756.3 Z" fill="#3b8fd9"/>
<!-- excel -->
<rect x="511" y="737" width="18.4" height="21" rx="1.6" fill="#21a366"/>
<rect x="520.2" y="737" width="9.2" height="7" fill="#33c481"/><rect x="520.2" y="744" width="9.2" height="7" fill="#107c41"/><rect x="511" y="751" width="18.4" height="7" rx="1.2" fill="#185c37"/><rect x="511" y="744" width="9.2" height="7" fill="#107c41" opacity=".6"/>
<rect x="504.9" y="741.4" width="12.6" height="12.6" rx="1.2" fill="#107c41"/>
<path d="M508.6 744.4 L513.8 751 M513.8 744.4 L508.6 751" stroke="#fff" stroke-width="1.7"/>
<!-- firefox -->
<circle cx="565.6" cy="748.6" r="11.4" fill="url(#ffg)"/>
<path d="M569.5 736 Q574 739 574.4 743 Q577.6 746.5 577 751 Q574.5 743.5 570 741.5 Q570.5 738.5 569.5 736 Z M556 741.5 Q555.5 738.8 557.5 737.4 Q558.5 740 561.5 740.6 Z" fill="#ffb52e"/>
<circle cx="566" cy="748" r="5.4" fill="#7542e5"/><path d="M560.4 746 Q564 744.4 567.5 746.4 Q570 748.5 568 751.4 Q572.5 750.4 572 746 Q570 742.6 565 742.6 Q561.6 743.4 560.4 746 Z" fill="#ff9a2a"/>
<!-- chrome -->
<g transform="translate(615 748)">
<circle r="12" fill="#fff"/>
<path d="M0 0 L-10.39 -6 A12 12 0 0 1 10.39 -6 Z" fill="#ea4335"/>
<path d="M0 0 L10.39 -6 A12 12 0 0 1 0 12 Z" fill="#fbbc04"/>
<path d="M0 0 L0 12 A12 12 0 0 1 -10.39 -6 Z" fill="#34a853"/>
<circle r="5.6" fill="#fff"/><circle r="4.4" fill="#4285f4"/>
</g>
<!-- word -->
<rect x="657.6" y="736.4" width="19.2" height="22" rx="1.6" fill="#41a5ee"/>
<rect x="657.6" y="741.9" width="19.2" height="5.5" fill="#2b7cd3"/><rect x="657.6" y="747.4" width="19.2" height="5.5" fill="#185abd"/><path d="M657.6 752.9 H676.8 V756.8 Q676.8 758.4 675.2 758.4 H659.2 Q657.6 758.4 657.6 756.8 Z" fill="#103f91"/>
<rect x="651" y="741" width="12.8" height="12.8" rx="1.2" fill="#185abd"/>
<path d="M653.8 744.2 L655.6 750.8 L657.4 745.4 L659.2 750.8 L661 744.2" fill="none" stroke="#fff" stroke-width="1.3"/>
<!-- chrome 2 w/ profile -->
<g transform="translate(712.6 746.6)">
<circle r="11.4" fill="#fff"/>
<path d="M0 0 L-9.87 -5.7 A11.4 11.4 0 0 1 9.87 -5.7 Z" fill="#ea4335"/>
<path d="M0 0 L9.87 -5.7 A11.4 11.4 0 0 1 0 11.4 Z" fill="#fbbc04"/>
<path d="M0 0 L0 11.4 A11.4 11.4 0 0 1 -9.87 -5.7 Z" fill="#34a853"/>
<circle r="5.3" fill="#fff"/><circle r="4.2" fill="#4285f4"/>
</g>
<circle cx="720" cy="754.2" r="6.4" fill="#9fb3c4" stroke="#e9eef2" stroke-width="0.8"/><circle cx="720" cy="752.4" r="2.2" fill="#e8d9c4"/><path d="M716 758.6 Q720 753.6 724 758.6 Z" fill="#4d5b68"/>
<!-- paint -->
<ellipse cx="761" cy="749.6" rx="10.6" ry="8.4" fill="#e7eef4" transform="rotate(-18 761 749.6)"/>
<ellipse cx="761" cy="749.6" rx="10.6" ry="8.4" fill="none" stroke="#9fb2c2" stroke-width="0.8" transform="rotate(-18 761 749.6)"/>
<circle cx="754.6" cy="748.6" r="2" fill="#e8412f"/><circle cx="758.6" cy="744.4" r="2" fill="#f6c02c"/><circle cx="764" cy="743.6" r="2" fill="#3aa757"/><circle cx="756.8" cy="753.6" r="2" fill="#2f7de1"/><circle cx="763.6" cy="754.2" r="2.3" fill="#101214"/>
<path d="M772.6 736.4 L774.6 738 L765 752 L762.6 750.4 Z" fill="#d98b3a"/><path d="M765 752 L762.6 750.4 L760.8 756 Z" fill="#8a5a34"/><path d="M770.8 739 L773 740.4 L774.6 738 L772.6 736.4 Z" fill="#c04a3a"/>
<!-- running indicators -->
<g fill="#76b9ed"><rect x="448.5" y="765.6" width="31" height="2.4"/><rect x="497.2" y="765.6" width="40" height="2.4"/><rect x="640" y="765.6" width="48" height="2.4"/><rect x="693.4" y="765.6" width="38.6" height="2.4"/><rect x="741.2" y="765.6" width="40.4" height="2.4"/></g>
<rect x="480.6" y="765.6" width="7" height="2.4" fill="#4f87b5"/>
<!-- tray -->
<g fill="none" stroke="#fff" stroke-width="1.1">
<path d="M1116.5 750.5 L1122.5 744.5 L1128.5 750.5"/>
<rect x="1142.5" y="743.5" width="8.5" height="9.5" rx="1.6"/><path d="M1151 746.5 L1154 744.6 V752 L1151 750"/><path d="M1143.6 741.4 Q1147 739.2 1150.4 741.4 M1143.6 755 Q1147 757.2 1150.4 755" stroke-width="0.9"/>
<rect x="1166.5" y="742" width="12" height="8.5"/><path d="M1172.5 750.5 V754 M1169 754.5 H1176"/><rect x="1163" y="745.5" width="4.5" height="7" fill="#101214"/><path d="M1165.2 752.5 V755"/>
<path d="M1187 746.2 H1189.6 L1193 743 V754 L1189.6 750.8 H1187 Z"/><path d="M1195.2 745.6 Q1197 748.5 1195.2 751.4 M1197.6 743.8 Q1200.4 748.5 1197.6 753.2" stroke-width="0.9"/><path d="M1200 742.2 Q1203.6 748.5 1200 754.8" stroke-width="0.8" opacity=".55"/>
<path d="M1319.4 740 H1334.8 V751.4 H1325 L1322.2 754.6 V751.4 H1319.4 Z" fill="#fff" stroke="none"/>
</g>
<path d="M1322 743.2 H1332.4 M1322 745.6 H1332.4 M1322 748 H1332.4" stroke="#101214" stroke-width="0.9"/>
<circle cx="1335.8" cy="755.6" r="7" fill="#333" stroke="#5a5a5a" stroke-width="1"/>
<path d="M1355.5 728 V768" stroke="#4a4a4a" stroke-width="1"/>
</svg>


<div id="texts">
<span class="t" style='left:422px;top:11.0px;font-size:12px;line-height:14px;color:#ffffff;font-family:"Liberation Sans", sans-serif;transform:scaleX(1.0103);white-space:pre;'>Documento1  -  Word</span>
<span class="t" style='left:800px;top:9.1px;font-size:12px;line-height:14px;color:#b4c6e2;font-family:"Liberation Sans", sans-serif;transform:scaleX(0.9487);'>Herramientas de tabla</span>
<span class="t" style='left:938px;top:10.6px;font-size:12px;line-height:14px;color:#ffffff;font-family:"Liberation Sans", sans-serif;transform:scaleX(0.9111);'>GAD PARROQUIAL VALLE HERMOSO</span>
<span class="t" style='left:12px;top:42.5px;font-size:12px;line-height:14px;color:#ffffff;font-family:"Liberation Sans", sans-serif;transform:scaleX(1.0496);'>Archivo</span>
<span class="t" style='left:137px;top:42.5px;font-size:12px;line-height:14px;color:#ffffff;font-family:"Liberation Sans", sans-serif;transform:scaleX(0.9585);'>Insertar</span>
<span class="t" style='left:203px;top:42.5px;font-size:12px;line-height:14px;color:#ffffff;font-family:"Liberation Sans", sans-serif;transform:scaleX(0.9996);'>Dibujar</span>
<span class="t" style='left:268px;top:42.5px;font-size:12px;line-height:14px;color:#ffffff;font-family:"Liberation Sans", sans-serif;transform:scaleX(0.9636);'>Diseño</span>
<span class="t" style='left:331px;top:42.5px;font-size:12px;line-height:14px;color:#ffffff;font-family:"Liberation Sans", sans-serif;transform:scaleX(0.9941);'>Disposición</span>
<span class="t" style='left:419px;top:42.5px;font-size:12px;line-height:14px;color:#ffffff;font-family:"Liberation Sans", sans-serif;transform:scaleX(0.9370);'>Referencias</span>
<span class="t" style='left:506px;top:42.5px;font-size:12px;line-height:14px;color:#ffffff;font-family:"Liberation Sans", sans-serif;transform:scaleX(0.9848);'>Correspondencia</span>
<span class="t" style='left:623px;top:42.5px;font-size:12px;line-height:14px;color:#ffffff;font-family:"Liberation Sans", sans-serif;transform:scaleX(0.9094);'>Revisar</span>
<span class="t" style='left:686px;top:42.5px;font-size:12px;line-height:14px;color:#ffffff;font-family:"Liberation Sans", sans-serif;transform:scaleX(0.9823);'>Vista</span>
<span class="t" style='left:738px;top:42.5px;font-size:12px;line-height:14px;color:#ffffff;font-family:"Liberation Sans", sans-serif;transform:scaleX(1.0351);'>Ayuda</span>
<span class="t" style='left:802px;top:42.5px;font-size:12px;line-height:14px;color:#ffffff;font-family:"Liberation Sans", sans-serif;transform:scaleX(0.9713);'>Diseño de tabla</span>
<span class="t" style='left:910px;top:42.5px;font-size:12px;line-height:14px;color:#ffffff;font-family:"Liberation Sans", sans-serif;transform:scaleX(0.9941);'>Disposición</span>
<span class="t" style='left:1027px;top:42.5px;font-size:12px;line-height:14px;color:#ffffff;font-family:"Liberation Sans", sans-serif;transform:scaleX(0.9144);'>¿Qué desea hacer?</span>
<span class="t" style='left:81px;top:42.5px;font-size:12px;line-height:14px;color:#2b579a;font-family:"Liberation Sans", sans-serif;transform:scaleX(1.0351);'>Inicio</span>
<span class="t" style='left:14.7px;top:105.4px;font-size:12px;line-height:14px;color:#262626;font-family:"Liberation Sans", sans-serif;transform:scaleX(0.9147);'>Pegar</span>
<span class="t" style='left:72px;top:72.0px;font-size:12px;line-height:14px;color:#a6a6a6;font-family:"Liberation Sans", sans-serif;transform:scaleX(0.9897);'>Cortar</span>
<span class="t" style='left:72px;top:95.0px;font-size:12px;line-height:14px;color:#a6a6a6;font-family:"Liberation Sans", sans-serif;transform:scaleX(0.9898);'>Copiar</span>
<span class="t" style='left:72px;top:118.0px;font-size:12px;line-height:14px;color:#262626;font-family:"Liberation Sans", sans-serif;transform:scaleX(1.0079);'>Copiar formato</span>
<span class="t" style='left:42.5px;top:141.0px;font-size:12px;line-height:14px;color:#444444;font-family:"Liberation Sans", sans-serif;transform:scaleX(0.9333);'>Portapapeles</span>
<span class="t" style='left:179.5px;top:79.5px;font-size:12px;line-height:14px;color:#262626;font-family:"Liberation Sans", sans-serif;transform:scaleX(0.9701);'>Calibri</span>
<span class="t" style='left:292px;top:79.5px;font-size:12px;line-height:14px;color:#262626;font-family:"Liberation Sans", sans-serif;transform:scaleX(0.8822);'>11</span>
<span class="t" style='left:182.5px;top:109.0px;font-size:13px;line-height:16px;color:#444;font-family:"Liberation Sans", sans-serif;font-weight:700;transform:scaleX(1.0116);'>N</span>
<span class="t" style='left:207px;top:109.0px;font-size:13px;line-height:16px;color:#444;font-family:"Liberation Sans", sans-serif;font-weight:700;font-style:italic;transform:scaleX(0.8519);'>K</span>
<span class="t" style='left:231px;top:109.0px;font-size:13px;line-height:16px;color:#444;font-family:"Liberation Sans", sans-serif;font-weight:700;transform:scaleX(0.9225);text-decoration:underline;'>S</span>
<span class="t" style='left:266px;top:110.5px;font-size:11px;line-height:13px;color:#444;font-family:"Liberation Sans", sans-serif;transform:scaleX(0.9014);text-decoration:line-through;'>abc</span>
<span class="t" style='left:290px;top:141.0px;font-size:12px;line-height:14px;color:#444444;font-family:"Liberation Sans", sans-serif;transform:scaleX(0.9636);'>Fuente</span>
<span class="t" style='left:561.5px;top:141.0px;font-size:12px;line-height:14px;color:#444444;font-family:"Liberation Sans", sans-serif;transform:scaleX(0.9019);'>Párrafo</span>
<span class="t" style='left:885.5px;top:141.0px;font-size:12px;line-height:14px;color:#444444;font-family:"Liberation Sans", sans-serif;transform:scaleX(0.9054);'>Estilos</span>
<span class="t" style='left:1148.5px;top:141.0px;font-size:12px;line-height:14px;color:#444444;font-family:"Liberation Sans", sans-serif;transform:scaleX(0.9401);'>Edición</span>
<span class="t" style='left:1238.5px;top:141.0px;font-size:12px;line-height:14px;color:#444444;font-family:"Liberation Sans", sans-serif;transform:scaleX(0.9355);'>Complementos</span>
<span class="t" style='left:1235.5px;top:105.5px;font-size:12px;line-height:14px;color:#262626;font-family:"Liberation Sans", sans-serif;transform:scaleX(1.0037);'>Complementos</span>
<span class="t" style='left:1139px;top:71.5px;font-size:12px;line-height:14px;color:#262626;font-family:"Liberation Sans", sans-serif;transform:scaleX(0.9368);'>Buscar</span>
<span class="t" style='left:1139px;top:94.5px;font-size:12px;line-height:14px;color:#262626;font-family:"Liberation Sans", sans-serif;transform:scaleX(0.9428);'>Reemplazar</span>
<span class="t" style='left:1139px;top:118.0px;font-size:12px;line-height:14px;color:#262626;font-family:"Liberation Sans", sans-serif;transform:scaleX(0.9489);'>Seleccionar</span>
<span class="t" style='left:728px;top:84.9px;font-size:12.6px;line-height:15px;color:#000;font-family:"Liberation Sans", sans-serif;transform:scaleX(0.9579);'>AaBbCcDc</span>
<span class="t" style='left:733.5px;top:109.5px;font-size:12px;line-height:14px;color:#444444;font-family:"Liberation Sans", sans-serif;transform:scaleX(1.0010);'>¶ Normal</span>
<span class="t" style='left:800.5px;top:84.9px;font-size:12.6px;line-height:15px;color:#000;font-family:"Liberation Sans", sans-serif;transform:scaleX(0.9498);'>AaBbCcDc</span>
<span class="t" style='left:799.5px;top:109.5px;font-size:12px;line-height:14px;color:#444444;font-family:"Liberation Sans", sans-serif;transform:scaleX(0.9100);'>¶ Sin espa...</span>
<span class="t" style='left:872.5px;top:81.5px;font-size:17.4px;line-height:21px;color:#2e5b97;font-family:"Liberation Sans", sans-serif;transform:scaleX(0.9170);'>AaBbCc</span>
<span class="t" style='left:882px;top:109.5px;font-size:12px;line-height:14px;color:#444444;font-family:"Liberation Sans", sans-serif;transform:scaleX(0.9493);'>Título 1</span>
<span class="t" style='left:944.5px;top:82.6px;font-size:14.6px;line-height:18px;color:#2e5b97;font-family:"Liberation Sans", sans-serif;transform:scaleX(0.9129);'>AaBbCcD</span>
<span class="t" style='left:954px;top:109.5px;font-size:12px;line-height:14px;color:#444444;font-family:"Liberation Sans", sans-serif;transform:scaleX(0.9617);'>Título 2</span>
<span class="t" style='left:1017px;top:71.2px;font-size:28px;line-height:34px;color:#000;font-family:"Liberation Sans", sans-serif;transform:scaleX(1.0201);'>AaB</span>
<span class="t" style='left:1030.5px;top:109.5px;font-size:12px;line-height:14px;color:#444444;font-family:"Liberation Sans", sans-serif;transform:scaleX(0.9995);'>Título</span>
<span class="t" style='left:585px;top:206.6px;font-size:18.7px;line-height:22px;color:#80b5d0;font-family:"Liberation Sans", sans-serif;font-weight:700;transform:scaleX(1.1466);-webkit-text-stroke:1.1px currentColor;letter-spacing:0.4px;'>GAD</span>
<span class="t" style='left:585px;top:223.2px;font-size:18.2px;line-height:22px;color:#80b5d0;font-family:"Liberation Sans", sans-serif;font-weight:700;transform:scaleX(1.0607);-webkit-text-stroke:1.1px currentColor;letter-spacing:0.4px;'>PARROQUIAL</span>
<span class="t" style='left:585.4px;top:239.7px;font-size:26.5px;line-height:32px;color:#fbe38a;font-family:"Liberation Sans", sans-serif;font-weight:700;transform:scaleX(1.1300);-webkit-text-stroke:1.1px currentColor;letter-spacing:0.4px;'>VALLE</span>
<span class="t" style='left:691px;top:239.7px;font-size:26.5px;line-height:32px;color:#8bb094;font-family:"Liberation Sans", sans-serif;font-weight:700;transform:scaleX(1.0949);-webkit-text-stroke:1.1px currentColor;letter-spacing:0.4px;'>HERMOSO</span>
<span class="t" style='left:588px;top:328.8px;font-size:17.3px;line-height:21px;color:#000;font-family:"DejaVu Serif", "Liberation Serif", serif;font-weight:700;transform:scaleX(0.9761);-webkit-text-stroke:0.35px #000;'>GOBIERNO AUTÓNOMO DESCENTRALIZADO</span>
<span class="t" style='left:612px;top:351.4px;font-size:17.3px;line-height:21px;color:#000;font-family:"DejaVu Serif", "Liberation Serif", serif;font-weight:700;transform:scaleX(0.9958);-webkit-text-stroke:0.35px #000;'>PARROQUIAL RURAL VALLE HERMOSO</span>
<span class="t" style='left:616px;top:396.5px;font-size:21.6px;line-height:26px;color:#000;font-family:"Liberation Sans", sans-serif;transform:scaleX(1.0313);-webkit-text-stroke:1px #000;'>INFORME DE</span>
<span class="t" style='left:490.8px;top:428.3px;font-size:21.6px;line-height:26px;color:#000;font-family:"Liberation Sans", sans-serif;transform:scaleX(1.0311);-webkit-text-stroke:1px #000;'>DETERMINACIÓN DE LA NECESIDAD</span>
<span class="t" style='left:348.7px;top:459.1px;font-size:14.4px;line-height:17px;color:#000;font-family:"Liberation Sans", sans-serif;font-weight:700;transform:scaleX(0.9853);'>Fundamento:</span>
<span class="t" style='left:442.5px;top:459.1px;font-size:14.4px;line-height:17px;color:#000;font-family:"Liberation Sans", sans-serif;transform:scaleX(0.9972);'>Reglamento General de la Ley Orgánica del Sistema Nacional de Contratación Pública, Art.</span>
<span class="t" style='left:678px;top:478.5px;font-size:14.4px;line-height:17px;color:#000;font-family:"Liberation Sans", sans-serif;transform:scaleX(0.9366);'>44</span>
<span class="t" style='left:347.2px;top:538.0px;font-size:19.5px;line-height:23px;color:#000;font-family:"Liberation Sans", sans-serif;font-weight:700;transform:scaleX(0.9994);'>1. ANTECEDENTES:</span>
<span class="t" style='left:346.3px;top:574.7px;font-size:12.8px;line-height:15px;color:#000;font-family:"Liberation Sans", sans-serif;font-weight:700;transform:scaleX(1.0393);'>TIPO DE PRODUCTO:</span>
<span class="t" style='left:586.6px;top:575.7px;font-size:11.8px;line-height:14px;color:#000;font-family:"Liberation Sans", sans-serif;font-weight:700;transform:scaleX(1.0004);'>BIEN</span>
<span class="t" style='left:668.8px;top:575.7px;font-size:11.8px;line-height:14px;color:#000;font-family:"Liberation Sans", sans-serif;font-weight:700;transform:scaleX(0.9880);'>SERVICIO</span>
<span class="t" style='left:742px;top:576.5px;font-size:11.5px;line-height:14px;color:#000;font-family:"Liberation Sans", sans-serif;transform:scaleX(0.9043);'>x</span>
<span class="t" style='left:772.6px;top:575.7px;font-size:11.8px;line-height:14px;color:#000;font-family:"Liberation Sans", sans-serif;font-weight:700;transform:scaleX(0.9760);'>OBRA</span>
<span class="t" style='left:885.9px;top:575.7px;font-size:11.8px;line-height:14px;color:#000;font-family:"Liberation Sans", sans-serif;font-weight:700;transform:scaleX(1.0255);'>CONSULTORIA</span>
<span class="t" style='left:346.3px;top:602.9px;font-size:12.8px;line-height:15px;color:#000;font-family:"Liberation Sans", sans-serif;font-weight:700;transform:scaleX(1.0170);'>IDENTIFICACION DEL OBJETO:</span>
<span class="t" style='left:346.3px;top:620.7px;font-size:10.8px;line-height:13px;color:#000;font-family:"Liberation Sans", sans-serif;transform:scaleX(1.1104);white-space:pre;'>No  anteponer  verbos  como  “contratar”  o</span>
<span class="t" style='left:346.3px;top:634.7px;font-size:10.8px;line-height:13px;color:#000;font-family:"Liberation Sans", sans-serif;transform:scaleX(1.0641);'>“adquirir”, simplemente se deberá determinar</span>
<span class="t" style='left:346.3px;top:648.5px;font-size:10.8px;line-height:13px;color:#000;font-family:"Liberation Sans", sans-serif;transform:scaleX(1.0230);'>el objeto de la contratación.</span>
<span class="t" style='left:346.3px;top:663.8px;font-size:10.8px;line-height:13px;color:#000;font-family:"Liberation Sans", sans-serif;transform:scaleX(1.0125);'>Considerar Art. 48 del nuevo Reglamento y Art.</span>
<span class="t" style='left:346px;top:678.4px;font-size:10.8px;line-height:13px;color:#000;font-family:"Liberation Sans", sans-serif;transform:scaleX(0.9887);'>52 de la Normativa Secundaria del SNCP.</span>
<span class="t" style='left:586.6px;top:638.4px;font-size:12.8px;line-height:15px;color:#000;font-family:"Liberation Sans", sans-serif;font-weight:700;transform:scaleX(1.0620);'>SERVICIO DE MANTENIMIENTO DEL VEHICULO MOTO EA300H</span>
<span class="t" style='left:346.3px;top:696.3px;font-size:12.8px;line-height:15px;color:#000;font-family:"Liberation Sans", sans-serif;font-weight:700;transform:scaleX(1.0167);clip-path:inset(0 0 5.5px 0);'>CÓDIGO CPC:</span>
<span class="t" style='left:1029.6px;top:652.0px;font-size:18px;line-height:22px;color:rgba(0,0,0,0.27);font-family:"Liberation Sans", sans-serif;transform:scaleX(1.1080);'>Activar Windows</span>
<span class="t" style='left:1029.6px;top:677.6px;font-size:13.5px;line-height:16px;color:rgba(0,0,0,0.24);font-family:"Liberation Sans", sans-serif;transform:scaleX(1.0988);'>Ve a Configuración para activar Windows.</span>
<span class="t" style='left:12px;top:709.8px;font-size:11.5px;line-height:14px;color:#444444;font-family:"Liberation Sans", sans-serif;transform:scaleX(0.9791);'>Página 1 de 6</span>
<span class="t" style='left:100px;top:709.8px;font-size:11.5px;line-height:14px;color:#444444;font-family:"Liberation Sans", sans-serif;transform:scaleX(0.9670);'>1932 palabras</span>
<span class="t" style='left:222px;top:709.8px;font-size:11.5px;line-height:14px;color:#444444;font-family:"Liberation Sans", sans-serif;transform:scaleX(0.9462);'>Español (España)</span>
<span class="t" style='left:381px;top:710.3px;font-size:11.2px;line-height:13px;color:#2a2a2a;font-family:"Liberation Sans", sans-serif;font-weight:700;transform:scaleX(0.9373);'>Accesibilidad: es necesario investigar</span>
<span class="t" style='left:1325.8px;top:710.3px;font-size:11.5px;line-height:14px;color:#444444;font-family:"Liberation Sans", sans-serif;transform:scaleX(0.9007);'>100%</span>
<span class="t" style='left:88.2px;top:740.0px;font-size:15px;line-height:18px;color:#3a3a3a;font-family:"Liberation Sans", sans-serif;transform:scaleX(0.9612);'>Escribe aquí para buscar</span>
<span class="t" style='left:1215px;top:741.0px;font-size:11.5px;line-height:14px;color:#ffffff;font-family:"Liberation Sans", sans-serif;transform:scaleX(0.8038);'>ESP</span>
<span class="t" style='left:1261px;top:731.8px;font-size:11.8px;line-height:14px;color:#ffffff;font-family:"Liberation Sans", sans-serif;transform:scaleX(0.8974);'>16:22</span>
<span class="t" style='left:1252px;top:749.6px;font-size:11.8px;line-height:14px;color:#ffffff;font-family:"Liberation Sans", sans-serif;transform:scaleX(1.0017);'>8/8/2024</span>
<span class="t" style='left:1332.8px;top:749.3px;font-size:10.5px;line-height:13px;color:#ffffff;font-family:"Liberation Sans", sans-serif;font-weight:700;transform:scaleX(1.0610);'>2</span>
</div>
</body></html>
